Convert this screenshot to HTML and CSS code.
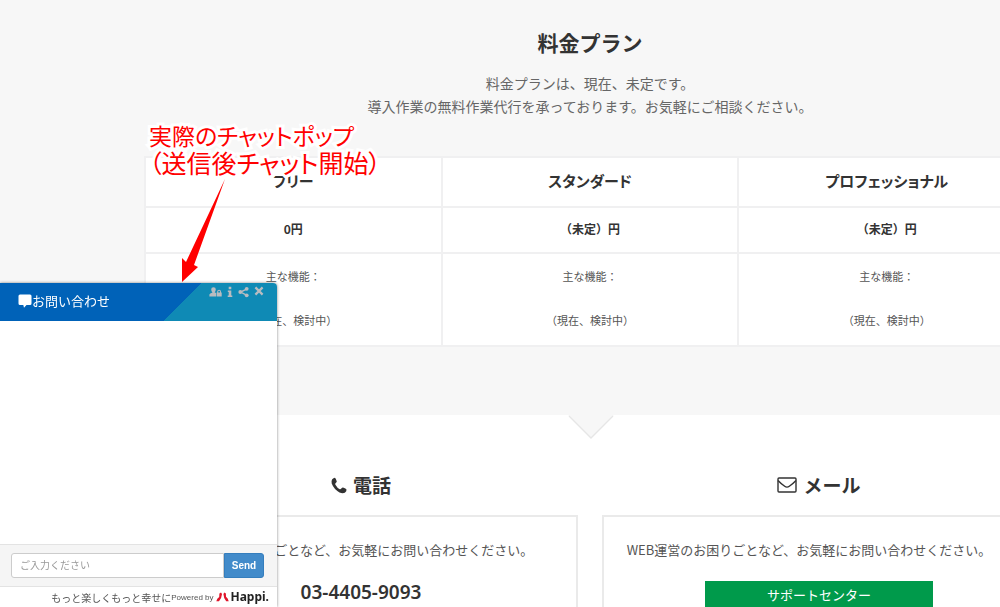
FILE: index.html
```
<!DOCTYPE html>
<html lang="ja">
<head>
<meta charset="utf-8">
<title>料金プラン</title>
<link rel="stylesheet" href="styles.css">
</head>
<body>
<main class="page">
  <section class="pricing">
    <h2 class="title">料金プラン</h2>
    <p class="lead">料金プランは、現在、未定です。<br>導入作業の無料作業代行を承っております。お気軽にご相談ください。</p>
    <table class="plans">
      <thead>
        <tr><th scope="col">フリー</th><th scope="col">スタンダード</th><th scope="col">プロフェッショナル</th></tr>
      </thead>
      <tbody>
        <tr class="price"><td>0円</td><td>（未定）円</td><td>（未定）円</td></tr>
        <tr class="features">
          <td><p>主な機能：</p><p>（現在、検討中）</p></td>
          <td><p>主な機能：</p><p>（現在、検討中）</p></td>
          <td><p>主な機能：</p><p>（現在、検討中）</p></td>
        </tr>
      </tbody>
    </table>
  </section>
  <section class="contact">
    <svg class="notch" width="46" height="24" viewBox="0 0 46 24" aria-hidden="true"><path d="M0 0H46L23 23Z" fill="#f7f7f7"/><path d="M1 1L23 23L45 1" fill="none" stroke="#e6e6e6" stroke-width="1.3"/></svg>
    <div class="way">
      <h3 class="way-title">
        <svg width="16" height="17" viewBox="0 0 16 17" aria-hidden="true"><path d="M1.2 2.2Q2.6.6 4 .7Q4.8 1 5.8 4.6Q5.8 5.4 4.3 6.4Q4 7 4.6 8Q6.2 11 8.8 12.2Q9.6 12.5 10.3 11.6Q11.3 10.4 12 10.5Q15 11.7 15.5 12.4Q15.8 14.4 13.8 15.7Q11.6 16.8 8.5 15.4Q3 12.6.7 6.6Q0 4 1.2 2.2Z" fill="#333"/></svg>
        電話
      </h3>
      <div class="card">
        <p class="note">WEB運営のお困りごとなど、お気軽にお問い合わせください。</p>
        <p class="tel">03-4405-9093</p>
      </div>
    </div>
    <div class="way">
      <h3 class="way-title">
        <svg width="20" height="16" viewBox="0 0 20 16" aria-hidden="true"><rect x="1" y="1" width="18" height="14" rx="1" fill="none" stroke="#333" stroke-width="1.4"/><path d="M1 3.5Q3 5.8 7.7 9.2Q10 11 12.3 9.2Q17 5.8 19 3.5" fill="none" stroke="#333" stroke-width="1.4"/></svg>
        メール
      </h3>
      <div class="card">
        <p class="note">WEB運営のお困りごとなど、お気軽にお問い合わせください。</p>
        <a class="support" href="#">サポートセンター</a>
      </div>
    </div>
  </section>
</main>

<aside class="chat">
  <header class="chat-head">
    <h4 class="chat-title"><svg width="14" height="14" viewBox="0 0 14 14" aria-hidden="true"><path d="M2 .5H12Q13.5.5 13.5 2V9.500Q13.5 11 12 11H8.5L6 13.7L5.3 11H2Q.5 11 .5 9.500V2Q.5.5 2 .5Z" fill="#fff"/></svg>お問い合わせ</h4>
    <div class="tools">
      <button type="button" aria-label="担当者"><svg width="13" height="12" viewBox="0 0 13 12"><path d="M4.5 1.2A2.3 2.3 0 0 1 6.8 3.6Q6.6 5.8 5.6 6.3L7 7.1V10.5H.4V8.6Q.6 7.4 3.5 6.4Q2.3 5.6 2.2 3.6A2.3 2.3 0 0 1 4.5 1.2Z"/><path d="M7.6 6.6H8.2V5.6A1.9 1.9 0 0 1 12 5.6V6.6H12.7V10.5H7.6ZM9.2 6.6H11V5.6A.9.9 0 0 0 9.2 5.6Z"/></svg></button>
      <button type="button" aria-label="情報"><svg width="6" height="12" viewBox="0 0 6 12"><path d="M1.7.8H4.3V3.2H1.7ZM.8 4.5H4.3V9.4H5.3V11H.7V9.4H1.7V6H.8Z"/></svg></button>
      <button type="button" aria-label="共有"><svg width="11" height="12" viewBox="0 0 11 12"><path d="M9 2.8L2.6 6L9 9.4" fill="none" stroke="#b9bcc0" stroke-width="1.4"/><circle cx="8.7" cy="2.8" r="1.9"/><circle cx="2.3" cy="6" r="1.9"/><circle cx="8.7" cy="9.3" r="1.9"/></svg></button>
      <button type="button" aria-label="閉じる"><svg width="10" height="12" viewBox="0 0 10 12"><path d="M1.4 1.4L8.6 8.6M8.6 1.4L1.4 8.6" fill="none" stroke="#b9bcc0" stroke-width="2.2"/></svg></button>
    </div>
  </header>
  <div class="chat-log"></div>
  <form class="chat-form">
    <input type="text" aria-label="メッセージ" placeholder="ご入力ください">
    <button type="button">Send</button>
  </form>
  <footer class="chat-foot">
    <span class="slogan">もっと楽しくもっと幸せに</span><span class="powered">Powered by</span>
    <svg class="mark" width="13" height="10" viewBox="0 0 13 10" aria-hidden="true"><path d="M3.4 1.4L5 .6L6 2Q5.900 5.500 3 9.200L.3 9.200Q.9 6.400 3.200 5Z" fill="#e0152b"/><path d="M7.400 2L8.400.6L9.900 1.400L10 4.700Q12.300 6.400 12.700 9.200L10.200 9.200Q7.600 6.400 7.400 2Z" fill="#e0152b"/></svg>
    <span class="brand">Happi.</span>
  </footer>
</aside>

<div class="callout">
  <p>実際のチャットポップ</p>
  <p class="sub">（送信後チャット開始）</p>
  <svg class="pointer" width="46" height="105" viewBox="0 0 46 105" aria-hidden="true"><path d="M44 0L13 86L17 88L1 103L1 79L5 83Z" fill="#f00"/></svg>
</div>
</body>
</html>
```
FILE: styles.css
```
* { box-sizing: border-box; }

body {
  margin: 0;
  overflow: hidden;
  background: #fff;
  color: #333;
  font-family: "Noto Sans CJK JP", "Noto Sans", sans-serif;
  font-size: 13px;
}

h2, h3, h4, p { margin: 0; }

.page { width: 118%; text-align: center; }

.pricing {
  padding: 26px 144px 68px;
  background: #f7f7f7;
}
.title { font-size: 21px; line-height: 32px; }
.lead { margin: 14px 0 38px; font-size: 14px; line-height: 23px; color: #666; }

.plans {
  width: 100%;
  table-layout: fixed;
  border-collapse: collapse;
  background: #fff;
}
.plans th, .plans td { padding: 0 0 4px; border: 2px solid #f0f0f1; }
.plans th { height: 50px; font-size: 15px; font-feature-settings: "palt"; }
.price td { height: 46px; font-size: 12px; font-weight: bold; }
.plans .features td { padding: 11px 0 14px; font-size: 11px; line-height: 22px; color: #555; }
.features p + p { margin-top: 22px; }

.contact {
  position: relative;
  display: grid;
  grid-template-columns: 1fr 1fr;
  gap: 24px;
  padding: 54px 144px 0;
}
.notch { position: absolute; top: 0; left: 50%; margin-left: -22px; }
.way-title {
  display: flex;
  align-items: center;
  justify-content: center;
  gap: 6px;
  margin-bottom: 14px;
  font-size: 19px;
  line-height: 32px;
}
.card {
  min-height: 140px;
  padding: 23px 0;
  border: 2px solid #eaeaea;
}
.note { padding-right: 20px; line-height: 20px; color: #555; }
.tel {
  margin-top: 18px;
  font: 600 19px/28px "Noto Sans", sans-serif;
}
.support {
  display: block;
  width: 228px;
  margin: 21px auto 0;
  background: #009a4b;
  color: #fff;
  font-size: 13px;
  line-height: 28px;
  text-decoration: none;
}

.chat {
  position: fixed;
  left: 0;
  bottom: 0;
  width: 277px;
  background: #fff;
  border-radius: 0 4px 0 0;
  box-shadow: 0 0 3px rgba(0, 0, 0, .5);
}
.chat-head {
  display: flex;
  justify-content: space-between;
  height: 38px;
  padding: 0 13px 0 18px;
  border-radius: 0 4px 0 0;
  background: linear-gradient(135deg, #0062b8 0 64%, #0f8ab5 64%);
}
.chat-title {
  display: flex;
  align-items: center;
  padding-bottom: 3px;
  color: #fff;
  font-size: 13px;
  font-weight: normal;
}
.tools { display: flex; align-items: flex-start; gap: 5px; padding-top: 3px; }
.tools button {
  display: flex;
  padding: 0;
  border: 0;
  background: none;
  fill: #b9bcc0;
}
.chat-log { height: 223px; }
.chat-form {
  display: flex;
  padding: 8px 13px 8px 11px;
  border: solid #e3e3e3;
  border-width: 1px 0;
  background: #f5f5f5;
}
.chat-form input {
  flex: 1;
  min-width: 0;
  height: 25px;
  padding: 0 8px 2px;
  border: 1px solid #ccc;
  border-radius: 3px 0 0 3px;
  background: #fff;
  font: 10px "Noto Sans CJK JP", sans-serif;
}
.chat-form input::placeholder { color: #999; }
.chat-form button {
  width: 40px;
  padding: 0;
  border: 1px solid #357ebd;
  border-radius: 0 3px 3px 0;
  background: #428bca;
  color: #fff;
  font: bold 10px "Liberation Sans", sans-serif;
}
.chat-foot {
  display: flex;
  align-items: center;
  justify-content: flex-end;
  height: 20px;
  padding-right: 8px;
  color: #555;
}
.slogan { font-size: 10px; }
.powered { font: 8px "Liberation Sans", sans-serif; }
.mark { margin: 0 2px; }
.brand { font: bold 12px/20px "Noto Sans", sans-serif; color: #222; }

.callout {
  position: absolute;
  left: 149px;
  top: 122px;
  color: #f00;
  font-size: 23px;
  line-height: 27px;
  font-feature-settings: "palt";
  white-space: nowrap;
  -webkit-text-stroke: 6px #fff;
  paint-order: stroke fill;
}
.sub { font-size: 25px; }
.pointer { position: absolute; left: 32px; top: 57px; }
```
